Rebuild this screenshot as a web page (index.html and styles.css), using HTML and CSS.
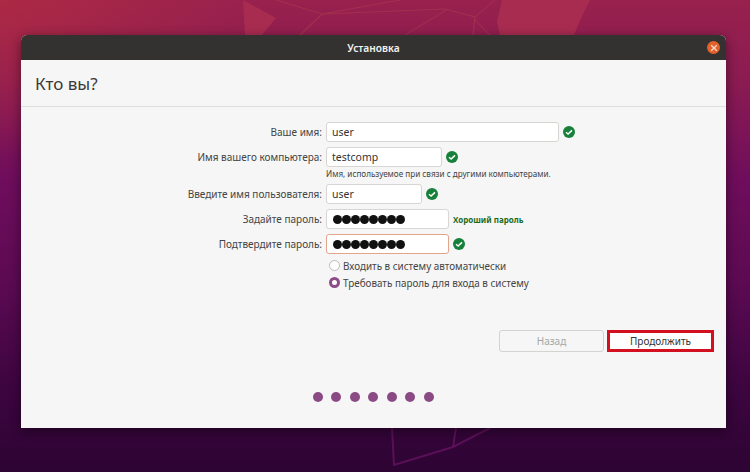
FILE: index.html
```html
<!DOCTYPE html>
<html lang="ru">
<head>
    <meta charset="UTF-8">
    <title>Установка</title>
    <link rel="stylesheet" href="styles.css">
</head>
<body>
    <svg class="wallpaper" width="750" height="472" viewBox="0 0 750 472">
        <path d="M243 0 L276 18 L262 35 L245 35 Z" fill="#a82c50"/>
        <path d="M502 0 L590 0 L582 16 L574 35 L500 35 L497 22 Z" fill="#a82c50"/>
        <path d="M300 35 L322 14 L445 9 L475 17 L473 35" fill="none" stroke="#a3304f" stroke-width="1.2"/>
        <path d="M322 14 L276 0 M322 14 L400 0 M475 17 L495 0 M448 9 L405 35 M475 20 L490 35" fill="none" stroke="#a3304f" stroke-width="1"/>
        <path d="M392 428 L394 465 L453 447 L490 428 M453 447 L456 428" fill="none" stroke="#5a1058" stroke-width="2"/>
    </svg>

    <div class="window">
        <div class="titlebar">
            <span class="title">Установка</span>
            <span class="close">
                <svg width="8" height="8" viewBox="0 0 8 8"><path d="M1.2 1.2 L6.8 6.8 M6.8 1.2 L1.2 6.8" stroke="#fbd9c8" stroke-width="1.3"/></svg>
            </span>
        </div>

        <div class="page-head">
            <h1>Кто вы?</h1>
        </div>

        <div class="content">
            <div class="form">
                <label class="label">Ваше имя:</label>
                <div class="field">
                    <div class="input w-name">user</div>
                    <svg class="check" width="12" height="12" viewBox="0 0 12 12"><circle cx="6" cy="6" r="6" fill="#17803a"/><path d="M3 6.2 L5.1 8 L9 4.4" fill="none" stroke="#fff" stroke-width="1.5"/></svg>
                </div>

                <label class="label">Имя вашего компьютера:</label>
                <div class="field">
                    <div class="input w-comp">testcomp</div>
                    <svg class="check" width="12" height="12" viewBox="0 0 12 12"><circle cx="6" cy="6" r="6" fill="#17803a"/><path d="M3 6.2 L5.1 8 L9 4.4" fill="none" stroke="#fff" stroke-width="1.5"/></svg>
                </div>

                <div class="hint">Имя, используемое при связи с другими компьютерами.</div>

                <label class="label">Введите имя пользователя:</label>
                <div class="field">
                    <div class="input w-user">user</div>
                    <svg class="check" width="12" height="12" viewBox="0 0 12 12"><circle cx="6" cy="6" r="6" fill="#17803a"/><path d="M3 6.2 L5.1 8 L9 4.4" fill="none" stroke="#fff" stroke-width="1.5"/></svg>
                </div>

                <label class="label">Задайте пароль:</label>
                <div class="field">
                    <div class="input w-pass dots">
                        <i></i><i></i><i></i><i></i><i></i><i></i><i></i><i></i>
                    </div>
                    <span class="strength">Хороший пароль</span>
                </div>

                <label class="label">Подтвердите пароль:</label>
                <div class="field">
                    <div class="input w-pass dots focused">
                        <i></i><i></i><i></i><i></i><i></i><i></i><i></i><i></i>
                    </div>
                    <svg class="check" width="12" height="12" viewBox="0 0 12 12"><circle cx="6" cy="6" r="6" fill="#17803a"/><path d="M3 6.2 L5.1 8 L9 4.4" fill="none" stroke="#fff" stroke-width="1.5"/></svg>
                </div>

                <div class="radios">
                    <div class="radio-row"><span class="radio"></span>Входить в систему автоматически</div>
                    <div class="radio-row"><span class="radio selected"></span>Требовать пароль для входа в систему</div>
                </div>
            </div>

            <div class="actions">
                <button class="btn back">Назад</button>
                <button class="btn next">Продолжить</button>
            </div>

            <div class="progress">
                <span></span><span></span><span></span><span></span><span></span><span></span><span></span>
            </div>
        </div>
    </div>
</body>
</html>
```

FILE: styles.css
```css
html, body {
    height: 100%;
}

body {
    margin: 0;
    width: 750px;
    height: 472px;
    overflow: hidden;
    box-sizing: border-box;
    padding: 35px 24px 44px 21px;
    font-family: "Noto Sans", "Open Sans", sans-serif;
    color: #3d3d3d;
    background:
        radial-gradient(ellipse 260px 160px at 0 0, rgba(190, 48, 62, 0.55), transparent),
        linear-gradient(180deg, #98214d 0%, #8a1b52 18%, #6f0d5c 38%, #5c0a52 60%, #3d0540 82%, #2d0433 100%);
}

.wallpaper {
    position: absolute;
    top: 0;
    left: 0;
}

.window {
    position: relative;
    height: 393px;
    display: flex;
    flex-direction: column;
    background: #f6f6f6;
    border-radius: 6px 6px 0 0;
    box-shadow: 0 3px 12px rgba(0, 0, 0, 0.45);
}

.titlebar {
    position: relative;
    height: 25px;
    flex: none;
    display: flex;
    align-items: center;
    justify-content: center;
    background: #333231;
    border-radius: 6px 6px 0 0;
}

.title {
    color: #f2f2f2;
    font-size: 10.2px;
    font-weight: 600;
}

.close {
    position: absolute;
    right: 6px;
    top: 6px;
    width: 13px;
    height: 13px;
    border-radius: 50%;
    background: #e2622d;
    display: flex;
    align-items: center;
    justify-content: center;
}

.page-head {
    height: 47px;
    flex: none;
    box-sizing: border-box;
    padding-left: 14px;
    border-bottom: 1px solid #dfdfdf;
    display: flex;
    align-items: center;
}

h1 {
    margin: 0;
    font-size: 17px;
    font-weight: 400;
    color: #3a3a3a;
}

.content {
    flex: 1;
    display: flex;
    flex-direction: column;
    padding-top: 15px;
}

.form {
    display: grid;
    grid-template-columns: 301px 1fr;
    column-gap: 4px;
    row-gap: 5px;
    align-items: center;
    font-size: 10px;
}

.label {
    text-align: right;
    color: #444;
}

.field {
    display: flex;
    align-items: center;
    gap: 4px;
}

.input {
    box-sizing: border-box;
    height: 20px;
    background: #fff;
    border: 1px solid #d8d5d2;
    border-radius: 3px;
    padding-left: 5px;
    display: flex;
    align-items: center;
    font-size: 10.5px;
    color: #333;
}

.w-name { width: 233px; }
.w-comp { width: 116px; }
.w-user { width: 96px; }
.w-pass { width: 123px; }

.dots {
    padding-left: 6px;
}

.dots i {
    width: 9px;
    height: 9px;
    border-radius: 50%;
    background: #111;
}

.focused {
    border-color: #e3a48c;
}

.check {
    flex: none;
}

.hint {
    grid-column: 2;
    font-size: 8.15px;
    color: #444;
    margin: -4px 0 -1px;
    height: 12px;
    line-height: 12px;
}

.strength {
    font-size: 8px;
    font-weight: 700;
    color: #1c6b1c;
}

.radios {
    grid-column: 2;
    font-size: 9.9px;
    color: #444;
    margin-top: -2px;
    padding-left: 3px;
}

.radio-row {
    height: 17px;
    display: flex;
    align-items: center;
    gap: 3px;
}

.radio {
    box-sizing: border-box;
    width: 11px;
    height: 11px;
    border-radius: 50%;
    background: #fff;
    border: 1px solid #bdbab6;
}

.radio.selected {
    background: #fff;
    border: 3.5px solid #8c4d86;
}

.actions {
    display: flex;
    justify-content: flex-end;
    gap: 3px;
    margin-top: 39px;
    padding-right: 12px;
}

.btn {
    box-sizing: border-box;
    width: 105px;
    height: 22px;
    padding: 0;
    font-family: inherit;
    font-size: 10px;
    border-radius: 3px;
    background: #f6f6f6;
}

.btn.back {
    color: #a3a7a7;
    border: 1px solid #d5d3d0;
}

.btn.next {
    width: 107px;
    color: #333;
    background: #fff;
    border: 3px solid #d3101f;
    border-radius: 0;
}

.progress {
    display: flex;
    justify-content: center;
    gap: 8.5px;
    margin-top: 40px;
    padding-right: 1px;
}

.progress span {
    width: 10px;
    height: 10px;
    border-radius: 50%;
    background: #8a4a84;
}
```
